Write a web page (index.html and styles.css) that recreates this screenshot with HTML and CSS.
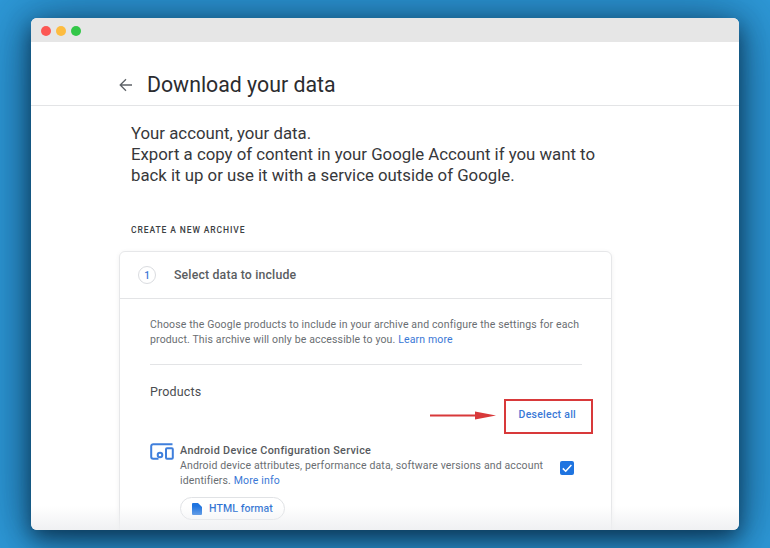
FILE: index.html
```html
<!DOCTYPE html>
<html lang="en">
<head>
    <meta charset="UTF-8">
    <title>Download your data</title>
    <link rel="stylesheet" href="styles.css">
</head>
<body>
    <div class="window">
        <div class="titlebar">
            <span class="dot dot-red"></span>
            <span class="dot dot-yellow"></span>
            <span class="dot dot-green"></span>
        </div>

        <header class="page-header">
            <svg class="back-icon" viewBox="0 0 14 14" width="14" height="14">
                <path d="M13 7H1.6M7 1.2 1.2 7 7 12.8" fill="none" stroke="#5f6368" stroke-width="1.3"/>
            </svg>
            <h1 class="page-title">Download your data</h1>
        </header>

        <main class="content">
            <p class="intro">Your account, your data.<br>Export a copy of content in your Google Account if you want to<br>back it up or use it with a service outside of Google.</p>

            <h2 class="section-label">CREATE A NEW ARCHIVE</h2>

            <section class="card">
                <div class="card-head">
                    <span class="step">1</span>
                    <h3 class="card-title">Select data to include</h3>
                </div>
                <div class="card-body">
                    <p class="card-desc">Choose the Google products to include in your archive and configure the settings for each<br>product. This archive will only be accessible to you. <a href="#">Learn more</a></p>
                    <div class="products-head">
                        <h4 class="products-title">Products</h4>
                        <a href="#" class="deselect">Deselect all</a>
                    </div>
                    <div class="product">
                        <svg class="product-icon" viewBox="0 0 24 17" width="24" height="17">
                            <path d="M22.5 1.2H3.2A2 2 0 0 0 1.2 3.2V13.8A2 2 0 0 0 3.2 15.8H8.5" fill="none" stroke="#3f7fdc" stroke-width="2"/>
                            <rect x="16" y="5.2" width="6.8" height="10.6" rx="1" fill="none" stroke="#3f7fdc" stroke-width="2"/>
                            <circle cx="10" cy="12" r="2.3" fill="none" stroke="#3f7fdc" stroke-width="2"/>
                        </svg>
                        <div class="product-info">
                            <div class="product-name">Android Device Configuration Service</div>
                            <p class="product-desc">Android device attributes, performance data, software versions and account<br>identifiers. <a href="#">More info</a></p>
                            <button class="format-btn">
                                <svg viewBox="0 0 10 12" width="10" height="12">
                                    <path d="M1 0H6L10 4V11A1 1 0 0 1 9 12H1A1 1 0 0 1 0 11V1A1 1 0 0 1 1 0Z" fill="#1f74e0"/>
                                </svg>
                                HTML format
                            </button>
                        </div>
                        <span class="checkbox">
                            <svg viewBox="0 0 14 14" width="14" height="14">
                                <path d="M2.8 7.4 5.7 10.2 11.4 4" fill="none" stroke="#fff" stroke-width="1.5"/>
                            </svg>
                        </span>
                    </div>
                </div>
            </section>
        </main>

        <div class="fade"></div>

        <!-- red annotation drawn on top of the screenshot -->
        <div class="note-box"></div>
        <svg class="note-arrow" viewBox="0 0 66 10" width="66" height="10">
            <path d="M0 5.5 H46" stroke="#d8393a" stroke-width="2"/>
            <path d="M45 1.5 66 5.5 45 9.5Z" fill="#d8393a"/>
        </svg>
    </div>
</body>
</html>
```

FILE: styles.css
```css
* {
    margin: 0;
    padding: 0;
    box-sizing: border-box;
}

html, body {
    height: 100%;
}

body {
    font-family: "Roboto", "Liberation Sans", sans-serif;
    color: #3c4043;
    background: #2e9ad9;
    padding: 18px 31px;
    overflow: hidden;
}

a {
    color: #3a78d6;
    text-decoration: none;
}

/* browser window */
.window {
    position: relative;
    width: 708px;
    height: 512px;
    background: #fff;
    border-radius: 6px;
    overflow: hidden;
    box-shadow: 0 8px 22px rgba(6, 36, 62, 0.75), 0 4px 60px 6px rgba(6, 40, 70, 0.55);
}

.titlebar {
    display: flex;
    align-items: center;
    gap: 5px;
    height: 24px;
    padding: 1px 10px 0;
    background: #e6e6e6;
}

.dot {
    width: 10px;
    height: 10px;
    border-radius: 50%;
}

.dot-red { background: #fc5753; }
.dot-yellow { background: #fdbc40; }
.dot-green { background: #33c748; }

/* page header */
.page-header {
    display: flex;
    align-items: center;
    gap: 14px;
    height: 64px;
    padding: 22px 0 0 88px;
    border-bottom: 1px solid #e3e4e6;
}

.page-title {
    font-size: 21.3px;
    font-weight: 400;
    color: #2b2c2f;
}

.back-icon {
    flex: none;
}

/* content */
.content {
    padding: 17px 0 0 100px;
}

.intro {
    font-size: 16.8px;
    line-height: 21px;
    color: #37383b;
}

.section-label {
    margin-top: 39px;
    font-size: 8.5px;
    font-weight: 500;
    letter-spacing: 0.9px;
    color: #3c4043;
}

.card {
    width: 493px;
    margin-top: 16px;
    margin-left: -12px;
    border: 1px solid #e6e7e9;
    border-radius: 6px;
    background: #fff;
    box-shadow: 0 1px 4px rgba(60, 64, 67, 0.08);
}

.card-head {
    display: flex;
    align-items: center;
    gap: 18px;
    height: 47px;
    padding-left: 18px;
    border-bottom: 1px solid #e3e4e6;
}

.step {
    display: flex;
    align-items: center;
    justify-content: center;
    width: 18px;
    height: 18px;
    border: 1px solid #dadce0;
    border-radius: 50%;
    font-size: 10px;
    font-weight: 500;
    color: #3a78d6;
}

.card-title {
    font-size: 12.3px;
    font-weight: 500;
    color: #5a5d61;
    letter-spacing: 0.17px;
}

.card-body {
    padding: 18px 29px 40px 30px;
}

.card-desc {
    padding-bottom: 17px;
    border-bottom: 1px solid #e3e4e6;
    font-size: 10.5px;
    line-height: 15px;
    color: #6a6e72;
    letter-spacing: 0.145px;
}

.products-head {
    display: flex;
    flex-direction: column;
    padding-top: 19px;
}

.products-title {
    font-size: 12.5px;
    font-weight: 400;
    color: #4a4d51;
    letter-spacing: 0.15px;
}

.deselect {
    align-self: flex-end;
    margin-top: 9px;
    margin-right: 6px;
    font-size: 10.5px;
    font-weight: 500;
    line-height: 14px;
    letter-spacing: 0.25px;
}

.product {
    display: flex;
    margin-top: 21px;
}

.product-icon {
    flex: none;
    margin: 0 6px 0 0;
}

.product-info {
    flex: 1;
}

.product-name {
    font-size: 10.8px;
    font-weight: 500;
    line-height: 15px;
    color: #56595d;
    letter-spacing: 0.32px;
}

.product-desc {
    font-size: 10.5px;
    line-height: 15px;
    color: #6a6e72;
    letter-spacing: 0.14px;
}

.format-btn {
    display: inline-flex;
    align-items: center;
    gap: 7px;
    height: 23px;
    margin-top: 9px;
    padding: 0 11px;
    border: 1px solid #e0e2e5;
    border-radius: 12px;
    background: #fff;
    font-family: inherit;
    font-size: 10.5px;
    font-weight: 500;
    letter-spacing: 0.1px;
    color: #2f72d2;
}

.checkbox {
    display: flex;
    align-items: center;
    justify-content: center;
    flex: none;
    width: 14px;
    height: 14px;
    margin: 18px 8px 0 0;
    border-radius: 2px;
    background: #1f74e0;
}

/* soft fade at the window bottom */
.fade {
    position: absolute;
    left: 0;
    right: 0;
    bottom: 0;
    height: 24px;
    background: linear-gradient(rgba(238, 239, 241, 0), rgba(238, 239, 241, 0.9));
}

.note-box {
    position: absolute;
    left: 473px;
    top: 381px;
    width: 89px;
    height: 35px;
    border: 2px solid #d8393a;
}

.note-arrow {
    position: absolute;
    left: 399px;
    top: 392px;
}
```
